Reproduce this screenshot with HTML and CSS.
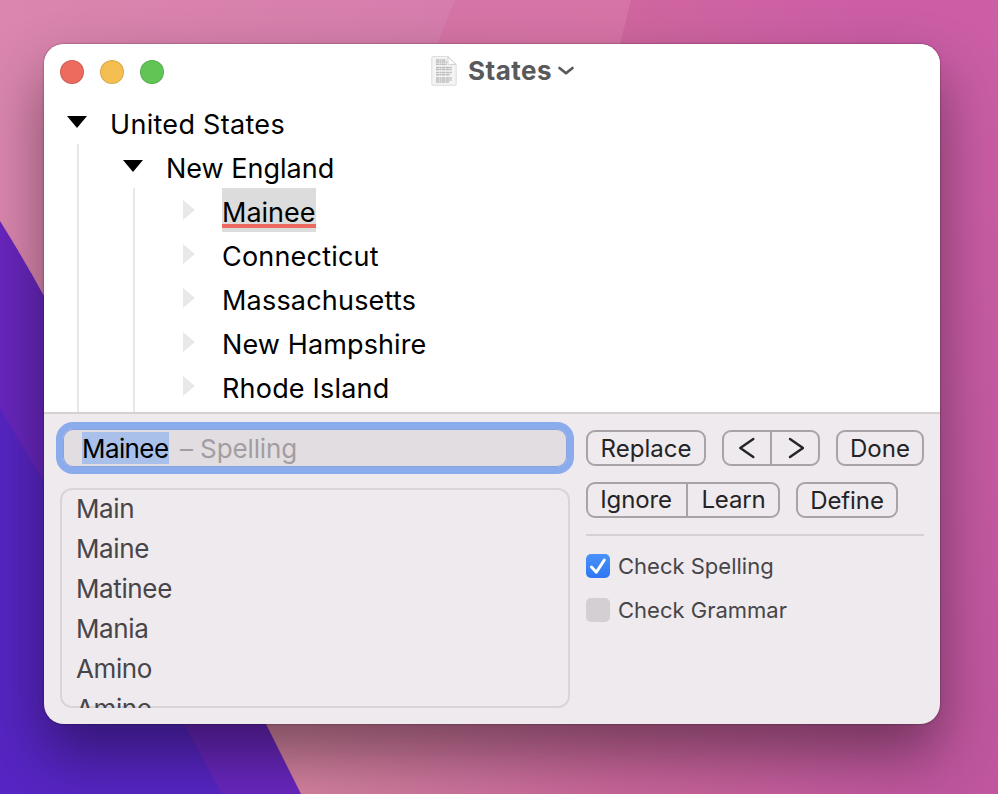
FILE: index.html
```html
<!DOCTYPE html>
<html lang="en">
<head>
<meta charset="utf-8">
<title>States</title>
<link rel="stylesheet" href="styles.css">
</head>
<body>
<svg class="wallpaper" viewBox="0 0 998 794" preserveAspectRatio="none" aria-hidden="true">
  <defs>
    <linearGradient id="base" x1="0" y1="0" x2="1" y2="0"><stop offset="0" stop-color="#da86ad"/><stop offset=".45" stop-color="#d67dad"/><stop offset="1" stop-color="#cb5ba5"/></linearGradient>
    <linearGradient id="mid" gradientUnits="userSpaceOnUse" x1="440" y1="0" x2="640" y2="0"><stop offset="0" stop-color="#d574a6"/><stop offset="1" stop-color="#d774a7"/></linearGradient>
    <linearGradient id="right" gradientUnits="userSpaceOnUse" x1="620" y1="0" x2="860" y2="0"><stop offset="0" stop-color="#d0669f"/><stop offset="1" stop-color="#cc5ea6"/></linearGradient>
    <linearGradient id="edge" gradientUnits="userSpaceOnUse" x1="0" y1="0" x2="0" y2="794"><stop offset="0" stop-color="#cc5ea6"/><stop offset="1" stop-color="#bf569e"/></linearGradient>
    <linearGradient id="floor" gradientUnits="userSpaceOnUse" x1="250" y1="0" x2="930" y2="0"><stop offset="0" stop-color="#d4859f"/><stop offset=".55" stop-color="#c8659a"/><stop offset="1" stop-color="#bf569e"/></linearGradient>
  </defs>
  <rect width="998" height="794" fill="url(#base)"/>
  <path d="M455 0H998V400H291Z" fill="url(#mid)"/>
  <path d="M631 0H998V400H531Z" fill="url(#right)"/>
  <path d="M0 600H998V794H0Z" fill="url(#floor)"/>
  <path d="M860 0H998V794H930V400H860Z" fill="url(#edge)"/>
  <path d="M0 221Q22 256 44 296L266 724L301 794H0Z" fill="#6826bd"/>
  <path d="M0 408Q90 560 184 724L222 794H0Z" fill="#5725c3"/>
</svg>
<main class="window">
  <header class="titlebar">
    <div class="lights"><i class="light close"></i><i class="light minimize"></i><i class="light zoom"></i></div>
    <div class="title">
      <svg class="doc" viewBox="0 0 26 30"><path d="M.8 1.5Q.8.6 1.7.6H17L25.2 8.5V28.4Q25.2 29.3 24.3 29.3H1.7Q.8 29.3.8 28.4Z" fill="#f4f4f4" stroke="#dcdcdc"/><path d="M17 .8V7.4Q17 8.4 18 8.4H25Z" fill="#fff" stroke="#c4c4c4" stroke-width=".8"/><g stroke="#bcbcbc" stroke-width="1.5" stroke-dasharray="3 .4 1.6 .4 4 .5"><path d="M5 4H15M5 6.1H16M5 8.2H16M5 11.5H21M5 13.6H21M5 16.6H21M5 18.7H19M5 22H21M5 24.1H21M5 26H18"/></g></svg>
      <span class="name">States</span>
      <svg class="chev" viewBox="0 0 18 12"><path d="M2.5 3 9 8.3 15.5 3" fill="none" stroke="#59595b" stroke-width="2.7" stroke-linecap="round" stroke-linejoin="round"/></svg>
    </div>
  </header>
  <section class="outline">
    <div class="row"><svg class="open" viewBox="0 0 20 12"><path d="M0 0H20L10 12Z"/></svg><span class="t1">United States</span></div>
    <div class="branch">
      <div class="row"><svg class="open" viewBox="0 0 20 12"><path d="M0 0H20L10 12Z"/></svg><span class="t2">New England</span></div>
      <div class="branch inner">
        <div class="row leaf"><svg class="shut" viewBox="0 0 12 20"><path d="M0 0V20L12 10Z"/></svg><span class="misspelt">Mainee</span></div>
        <div class="row leaf"><svg class="shut" viewBox="0 0 12 20"><path d="M0 0V20L12 10Z"/></svg><span class="t4">Connecticut</span></div>
        <div class="row leaf"><svg class="shut" viewBox="0 0 12 20"><path d="M0 0V20L12 10Z"/></svg><span class="t4">Massachusetts</span></div>
        <div class="row leaf"><svg class="shut" viewBox="0 0 12 20"><path d="M0 0V20L12 10Z"/></svg><span class="t6">New Hampshire</span></div>
        <div class="row leaf"><svg class="shut" viewBox="0 0 12 20"><path d="M0 0V20L12 10Z"/></svg><span class="t4">Rhode Island</span></div>
      </div>
    </div>
  </section>
  <section class="panel">
    <div class="left">
      <div class="field"><span class="picked">Mainee</span><span class="hint">– Spelling</span></div>
      <div class="guesses"><div>Main</div><div>Maine</div><div>Matinee</div><div>Mania</div><div>Amino</div><div>Amine</div></div>
    </div>
    <div class="right">
      <div class="buttons">
        <button class="btn replace">Replace</button>
        <div class="group nav"><button><svg viewBox="0 0 16 22"><path d="M14.3 2 1.3 11 14.3 20"/></svg></button><button><svg viewBox="0 0 16 22"><path d="M2 2 15 11 2 20"/></svg></button></div>
        <button class="btn done">Done</button>
      </div>
      <div class="buttons second">
        <div class="group words"><button class="ignore">Ignore</button><button class="learn">Learn</button></div>
        <button class="btn define">Define</button>
      </div>
      <div class="checks">
        <label><span class="box on"><svg viewBox="0 0 24 24"><path d="M5.5 13 10.3 18.2 18.3 6"/></svg></span>Check Spelling</label>
        <label><span class="box"></span>Check Grammar</label>
      </div>
    </div>
  </section>
</main>
</body>
</html>
```
FILE: styles.css
```css
* { box-sizing: border-box; }
body { margin: 0; width: 998px; height: 794px; overflow: hidden; padding: 44px 58px 0 44px; font-family: Inter, "Liberation Sans", sans-serif; color: #000; }
.wallpaper { position: absolute; inset: 0; width: 998px; height: 794px; z-index: -1; }
.window { width: 896px; height: 680px; border-radius: 20px; background: #eeeaee; box-shadow: 0 0 2px rgba(0,0,0,.5), 0 30px 60px rgba(0,0,0,.42); display: flex; flex-direction: column; }
.titlebar { height: 56px; flex: none; background: #fff; border-radius: 20px 20px 0 0; display: grid; grid-template-columns: 387px 1fr; align-items: center; }
.lights { display: flex; gap: 16px; padding-left: 16px; }
.light { width: 24px; height: 24px; border-radius: 50%; border: 1px solid rgba(0,0,0,.12); }
.close { background: #ec6a5e; }
.minimize { background: #f4bf50; }
.zoom { background: #61c555; }
.title { display: flex; align-items: center; padding-bottom: 3px; }
.doc { width: 26px; height: 30px; }
.name { margin-left: 11px; width: 84px; font-size: 26px; font-weight: 700; letter-spacing: .5px; color: #59595b; white-space: nowrap; }
.chev { width: 18px; height: 12px; margin-left: 5px; }
.outline { height: 312px; flex: none; background: #fff; padding-left: 22px; font-size: 27px; display: flex; flex-direction: column; }
.row { height: 44px; flex: none; display: flex; align-items: center; white-space: nowrap; }
.row span { line-height: 44px; padding-top: 3px; height: 44px; }
.t1 { letter-spacing: .3px; }
.t4 { letter-spacing: .2px; }
.t6 { letter-spacing: .12px; }
.open { width: 20px; height: 12px; margin: 0 23px 0 1px; }
.branch { margin-left: 11px; border-left: 2px solid #e8e8e8; padding-left: 43px; height: 268px; flex: none; }
.inner { height: 224px; }
.leaf { padding-left: 5px; }
.shut { width: 12px; height: 20px; fill: #e8e8e8; margin: 0 27px 0 0; }
.misspelt { background: linear-gradient(#ec6a5e,#ec6a5e) 0 36px / 100% 4px no-repeat #dcdcdc; }
.panel { height: 312px; border-top: 2px solid #d5d0d4; display: flex; padding: 8px 16px 0 12px; }
.left { width: 518px; }
.field { height: 52px; border: 7px solid #8aabec; border-radius: 17px; background: #e2dde0; background-clip: padding-box; box-shadow: inset 0 0 0 1px #8ba3dc; padding-left: 19px; display: flex; align-items: center; font-size: 26px; white-space: nowrap; }
.picked { background: #a9c1ea; height: 32px; line-height: 34px; width: 87px; letter-spacing: -.6px; }
.hint { color: #a29da1; margin-left: 11px; line-height: 34px; padding-top: 1px; letter-spacing: -.12px; }
.guesses { margin: 14px 4px 0; height: 220px; box-shadow: inset 0 0 0 2px #d9d4d8; border-radius: 12px; overflow: hidden; padding: 1px 0 0 16px; font-size: 26px; letter-spacing: -.38px; color: #474548; }
.guesses div { height: 40px; line-height: 40px; }
.right { margin-left: 12px; width: 338px; padding-top: 8px; color: #242325; }
.buttons { display: flex; gap: 16px; height: 36px; }
.second { margin-top: 16px; }
button { font: inherit; color: inherit; background: none; border: 0; padding: 0; font-size: 24px; display: flex; align-items: center; justify-content: center; white-space: nowrap; }
.btn, .group { border: 2px solid #a7a3a6; border-radius: 9px; height: 36px; }
.replace { width: 120px; }
.done { width: 88px; }
.define { width: 102px; letter-spacing: -.1px; }
.group { display: flex; }
.group button { flex: 1; }
.group button + button { border-left: 2px solid #a7a3a6; }
.nav { width: 98px; }
.nav button:first-child { padding-right: 1px; }
.nav button:last-child { padding-left: 1px; }
.nav svg { width: 16px; height: 22px; fill: none; stroke: #242325; stroke-width: 2.4; stroke-linecap: round; stroke-linejoin: round; }
.words { width: 194px; }
.words button { letter-spacing: -.15px; padding-bottom: 2px; }
.group .ignore { flex: 0 0 98px; padding-right: 2px; }
.group .learn { padding-left: 1px; }
.checks { margin-top: 16px; border-top: 2px solid #d5d0d4; padding-top: 18px; display: grid; gap: 20px; font-size: 22px; color: #474548; }
.checks label { height: 24px; display: flex; align-items: center; gap: 8px; }
.box { width: 24px; height: 24px; border-radius: 5px; background: #d4cfd3; display: block; }
.on { background: linear-gradient(#4a92f7,#2f75f5); }
.box svg { display: block; fill: none; stroke: #fff; stroke-width: 3; stroke-linecap: round; stroke-linejoin: round; }
```
